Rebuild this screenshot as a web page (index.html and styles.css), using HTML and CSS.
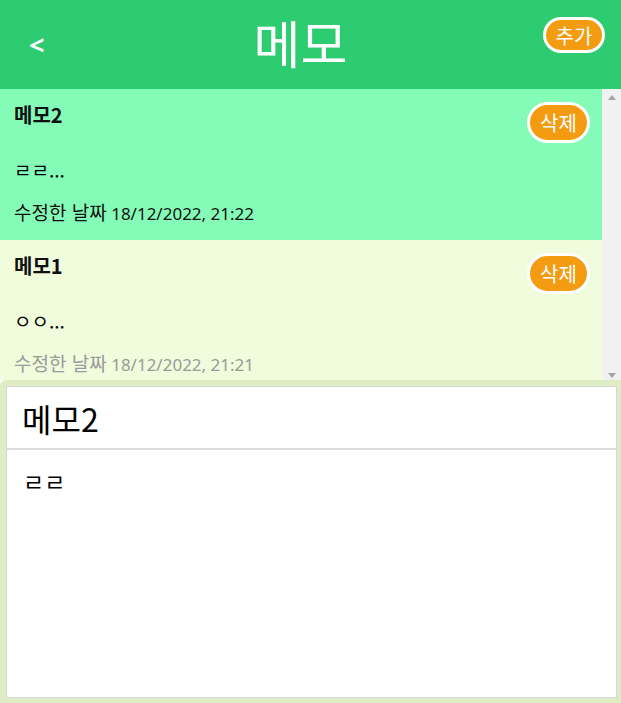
FILE: index.html
```html
<!DOCTYPE html>
<html lang="ko">
<head>
<meta charset="utf-8">
<title>메모</title>
<link rel="stylesheet" href="styles.css">
</head>
<body>
<div class="app">
  <header class="header">
    <span class="back">&lt;</span>
    <h1 class="title">메모</h1>
    <div class="header-right"><button class="btn btn-add">추가</button></div>
  </header>
  <div class="list-wrap">
    <ul class="list">
      <li class="item item-active">
        <div class="item-top">
          <span class="item-title">메모2</span>
          <button class="btn btn-del">삭제</button>
        </div>
        <p class="item-content">ㄹㄹ...</p>
        <p class="item-date"><span class="date-label">수정한 날짜</span> 18/12/2022, 21:22</p>
      </li>
      <li class="item">
        <div class="item-top">
          <span class="item-title">메모1</span>
          <button class="btn btn-del">삭제</button>
        </div>
        <p class="item-content">ㅇㅇ...</p>
        <p class="item-date item-date-muted"><span class="date-label">수정한 날짜</span> 18/12/2022, 21:21</p>
      </li>
    </ul>
    <div class="scrollbar">
      <span class="arrow arrow-up"></span>
      <span class="arrow arrow-down"></span>
    </div>
  </div>
  <section class="editor">
    <div class="editor-box">
      <div class="editor-title">메모2</div>
      <div class="editor-body">ㄹㄹ</div>
    </div>
  </section>
</div>
</body>
</html>
```
FILE: styles.css
```css
* { box-sizing: border-box; }
html, body { margin: 0; padding: 0; height: 100%; }
body {
  font-family: "Noto Sans", "Noto Sans CJK KR", sans-serif;
  color: #000;
  background: #fff;
}
.app {
  display: flex;
  flex-direction: column;
  height: 100vh;
}
.header {
  height: 89px;
  flex: none;
  background: #2ecc71;
  display: grid;
  grid-template-columns: 1fr auto 1fr;
  align-items: center;
  padding: 0 16px 0 29px;
  color: #fff;
}
.back {
  font-size: 27px;
  font-weight: 700;
  line-height: 1;
}
.title {
  margin: 0 33px 4px 0;
  font-size: 51px;
  font-weight: 400;
  line-height: 1;
  font-family: "Noto Sans CJK KR", sans-serif;
}
.header-right {
  display: flex;
  justify-content: flex-end;
  align-self: start;
  padding-top: 17px;
}
.btn {
  font-family: "Noto Sans CJK KR", sans-serif;
  background: #f39c12;
  color: #fff;
  border: 3px solid #fff;
  padding: 0;
  display: flex;
  align-items: center;
  justify-content: center;
}
.btn-add {
  width: 62px;
  height: 36px;
  border-radius: 18px;
  font-size: 20px;
}
.btn-del {
  width: 63px;
  height: 41px;
  border-radius: 21px;
  font-size: 20px;
}
.list-wrap {
  height: 291px;
  flex: none;
  display: flex;
  overflow: hidden;
}
.list {
  flex: 1;
  list-style: none;
  margin: 0;
  padding: 0;
  overflow: hidden;
}
.scrollbar {
  width: 19px;
  flex: none;
  background: #f1f1f1;
  display: flex;
  flex-direction: column;
  justify-content: space-between;
  align-items: center;
  padding: 6px 0 2px;
}
.arrow {
  width: 0;
  height: 0;
  border-left: 4.5px solid transparent;
  border-right: 4.5px solid transparent;
}
.arrow-up { border-bottom: 5px solid #a3a3a3; }
.arrow-down { border-top: 5px solid #a3a3a3; }
.item {
  background: #f0fcdc;
  padding: 13px 12px 0 14px;
  height: 151px;
}
.item-active { background: #84fbb6; }
.item-top {
  display: flex;
  justify-content: space-between;
  align-items: flex-start;
}
.item-title {
  font-family: "Noto Sans CJK KR", sans-serif;
  font-size: 20px;
  line-height: 26px;
  font-weight: 700;
  color: #111;
}
.item-content {
  margin: 14px 0 0 0;
  font-size: 19px;
  line-height: 26px;
  font-family: "Noto Sans CJK KR", sans-serif;
}
.item-date {
  margin: 16px 0 0 0;
  font-size: 17px;
  line-height: 26px;
  color: #111;
}
.date-label {
  font-family: "Noto Sans CJK KR", sans-serif;
  font-size: 19px;
}
.item-date-muted { color: #9a9a9a; }
.editor {
  flex: 1;
  background: #dfedc5;
  border-radius: 6px 0 0 0;
  padding: 6px 4px 5px 6px;
  display: flex;
}
.editor-box {
  flex: 1;
  background: #fff;
  border: 1px solid #d6d6d6;
  display: flex;
  flex-direction: column;
}
.editor-title {
  height: 63px;
  border-bottom: 2px solid #dcdcdc;
  padding: 0 15px;
  font-size: 32px;
  display: flex;
  align-items: center;
  font-family: "Noto Sans CJK KR", sans-serif;
}
.editor-body {
  flex: 1;
  padding: 14px 16px;
  font-size: 23px;
  font-family: "Noto Sans CJK KR", sans-serif;
}
```
